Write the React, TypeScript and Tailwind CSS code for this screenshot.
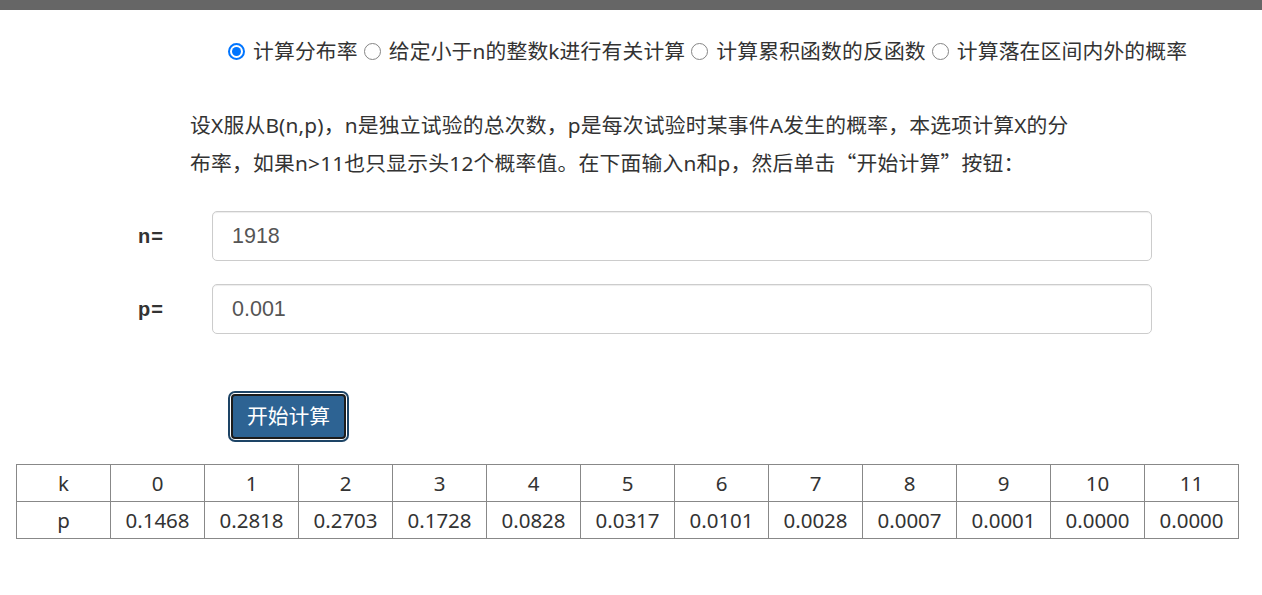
import { useState } from "react";

const options = [
  "计算分布率",
  "给定小于n的整数k进行有关计算",
  "计算累积函数的反函数",
  "计算落在区间内外的概率",
];

const probs = [
  "0.1468",
  "0.2818",
  "0.2703",
  "0.1728",
  "0.0828",
  "0.0317",
  "0.0101",
  "0.0028",
  "0.0007",
  "0.0001",
  "0.0000",
  "0.0000",
];

const cjk = { fontFamily: '"Noto Sans", "Noto Sans CJK SC", sans-serif' };
const cjkOnly = { fontFamily: '"Noto Sans CJK SC", sans-serif' };
const arial = { fontFamily: '"Liberation Sans", Arial, sans-serif' };

function Radio({ checked }: { checked: boolean }) {
  if (checked) {
    return (
      <span className="flex items-center justify-center w-[17px] h-[17px] rounded-full border-2 border-[#0075ff] bg-white mr-[8px] shrink-0">
        <span className="w-[9px] h-[9px] rounded-full bg-[#0075ff]" />
      </span>
    );
  }
  return (
    <span className="w-[17px] h-[17px] rounded-full border border-[#858585] bg-white mr-[8px] shrink-0" />
  );
}

export default function App() {
  const [mode, setMode] = useState(0);
  const [n, setN] = useState("1918");
  const [p, setP] = useState("0.001");

  return (
    <div className="w-[1262px] h-[595px] bg-white text-[#333] overflow-hidden" style={cjk}>
      <div className="h-[10px] bg-[#666]" />

      <div className="flex items-center pl-[228px] mt-[27px] h-[28px] text-[20.8px] leading-[28px] tracking-[0.15px]">
        {options.map((label, i) => (
          <label
            key={label}
            className="flex items-center mr-[6px] cursor-pointer"
            onClick={() => setMode(i)}
          >
            <Radio checked={mode === i} />
            <span>{label}</span>
          </label>
        ))}
      </div>

      <div className="pl-[190px] mt-[42px] text-[20.8px] leading-[37px] tracking-[0.2px]">
        <div>设X服从B(n,p)，n是独立试验的总次数，p是每次试验时某事件A发生的概率，本选项计算X的分</div>
        <div>
          布率，如果n&gt;11也只显示头12个概率值。在下面输入n和p，然后单击
          <span style={cjkOnly}>“开始计算”</span>按钮：
        </div>
      </div>

      <div className="flex flex-col gap-[23px] mt-[29px]">
        {[
          { label: "n=", value: n, set: setN },
          { label: "p=", value: p, set: setP },
        ].map((f) => (
          <div key={f.label} className="flex items-center">
            <span className="w-[212px] pl-[138px] font-bold text-[20px] tracking-[1px]" style={arial}>
              {f.label}
            </span>
            <input
              value={f.value}
              onChange={(e) => f.set(e.target.value)}
              className="w-[940px] h-[50px] border border-[#ccc] rounded-[5px] px-[19px] text-[21.5px] text-[#555] outline-none shadow-[inset_0_1px_1px_rgba(0,0,0,0.075)]"
              style={arial}
            />
          </div>
        ))}
      </div>

      <div className="pl-[231px] mt-[60px]">
        <button
          type="button"
          className="w-[115px] h-[45px] bg-[#2d6393] text-white text-[20.8px] border-2 border-[#1c1c1c] rounded-[4px] shadow-[0_0_0_1px_#fff,0_0_0_3px_#1d4466]"
        >
          开始计算
        </button>
      </div>

      <table className="ml-[16px] mt-[25px] border-collapse text-[20.5px] text-[#333]">
        <tbody>
          <tr>
            <td className="w-[94px] h-[37px] border border-[#888] text-center p-0">k</td>
            {probs.map((_, i) => (
              <td key={i} className="w-[94px] h-[37px] border border-[#888] text-center p-0">
                {i}
              </td>
            ))}
          </tr>
          <tr>
            <td className="w-[94px] h-[37px] border border-[#888] text-center p-0">p</td>
            {probs.map((v, i) => (
              <td key={i} className="w-[94px] h-[37px] border border-[#888] text-center p-0">
                {v}
              </td>
            ))}
          </tr>
        </tbody>
      </table>
    </div>
  );
}
